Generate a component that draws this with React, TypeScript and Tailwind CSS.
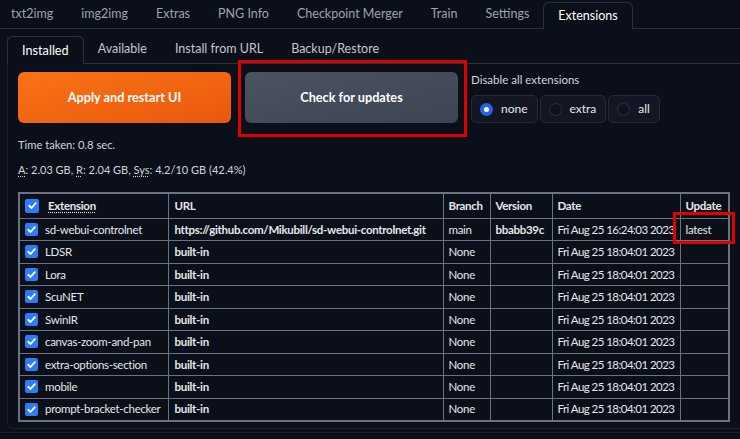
import React from 'react';

const topTabs = ['txt2img', 'img2img', 'Extras', 'PNG Info', 'Checkpoint Merger', 'Train', 'Settings', 'Extensions'];
const innerTabs = ['Installed', 'Available', 'Install from URL', 'Backup/Restore'];

const rows = [
  { name: 'sd-webui-controlnet', url: 'https://github.com/Mikubill/sd-webui-controlnet.git', branch: 'main', version: 'bbabb39c', date: 'Fri Aug 25 16:24:03 2023', update: 'latest' },
  { name: 'LDSR', url: 'built-in', branch: 'None', version: '', date: 'Fri Aug 25 18:04:01 2023', update: '' },
  { name: 'Lora', url: 'built-in', branch: 'None', version: '', date: 'Fri Aug 25 18:04:01 2023', update: '' },
  { name: 'ScuNET', url: 'built-in', branch: 'None', version: '', date: 'Fri Aug 25 18:04:01 2023', update: '' },
  { name: 'SwinIR', url: 'built-in', branch: 'None', version: '', date: 'Fri Aug 25 18:04:01 2023', update: '' },
  { name: 'canvas-zoom-and-pan', url: 'built-in', branch: 'None', version: '', date: 'Fri Aug 25 18:04:01 2023', update: '' },
  { name: 'extra-options-section', url: 'built-in', branch: 'None', version: '', date: 'Fri Aug 25 18:04:01 2023', update: '' },
  { name: 'mobile', url: 'built-in', branch: 'None', version: '', date: 'Fri Aug 25 18:04:01 2023', update: '' },
  { name: 'prompt-bracket-checker', url: 'built-in', branch: 'None', version: '', date: 'Fri Aug 25 18:04:01 2023', update: '' },
];

function Check({ size = 13 }: { size?: number }) {
  return (
    <span
      className="inline-flex items-center justify-center rounded-[2px] bg-[#2b7cf6] shrink-0"
      style={{ width: size, height: size }}
    >
      <svg viewBox="0 0 16 16" className="w-[11px] h-[11px]">
        <path d="M3.2 8.4 L6.6 11.6 L12.8 4.6" fill="none" stroke="white" strokeWidth="2.6" strokeLinecap="round" strokeLinejoin="round" />
      </svg>
    </span>
  );
}

function Radio({ label, checked }: { label: string; checked?: boolean }) {
  return (
    <div className="flex items-center gap-[8px] h-[28px] pl-[8px] pr-[9px] rounded-[5px] border border-[#242a36] bg-[#121723] text-[12px] text-[#e5e7eb]">
      {checked ? (
        <span className="w-[13px] h-[13px] rounded-full bg-[#2563eb] flex items-center justify-center">
          <span className="w-[5px] h-[5px] rounded-full bg-white" />
        </span>
      ) : (
        <span className="w-[13px] h-[13px] rounded-full border border-[#2b3240] bg-[#0e131d]" />
      )}
      <span>{label}</span>
    </div>
  );
}

const cell = 'border border-[#6b7280] px-[5px] whitespace-nowrap overflow-hidden';

export default function App() {
  return (
    <div
      className="relative w-[740px] h-[439px] overflow-hidden bg-[#0b0f19] text-[#e5e7eb]"
      style={{ fontFamily: 'Lato, "Noto Sans", sans-serif' }}
    >
      {/* top tabs */}
      <div className="flex h-[29px] items-end border-b border-[#2a303c] ml-[-3px]">
        {topTabs.map(t => (
          <div
            key={t}
            className={
              t === 'Extensions'
                ? 'h-[27px] px-[14px] flex items-center text-[12.5px] text-white border border-b-0 border-[#2a303c] rounded-t-[6px] bg-[#0b0f19] mb-[-1px]'
                : 'h-[27px] px-[14px] flex items-center text-[12.5px] text-[#9ca3af]'
            }
          >
            {t}
          </div>
        ))}
      </div>

      {/* extensions panel */}
      <div className="pl-[2px] pt-[7px] h-[404px] border-b border-[#1c212c]">
        <div className="ml-[5px] h-[393px] border-l border-b border-[#1c212c] rounded-bl-[6px]">
          {/* inner tabs */}
          <div className="flex h-[28px] items-end border-b border-[#2a303c]">
            {innerTabs.map(t => (
              <div
                key={t}
                className={
                  t === 'Installed'
                    ? 'h-[28px] px-[14px] flex items-center text-[12.7px] text-white border border-b-0 border-[#2a303c] rounded-t-[6px] bg-[#0b0f19] mb-[-1px] ml-[-1px]'
                    : 'h-[28px] px-[14px] flex items-center text-[12.5px] text-[#c2c7d0]'
                }
              >
                {t}
              </div>
            ))}
          </div>

          <div className="pl-[10px] pt-[8px]">
            {/* buttons row */}
            <div className="flex items-start">
              <button className="w-[213px] h-[51px] rounded-[6px] bg-gradient-to-br from-[#f97316] to-[#ea580c] text-[12.7px] font-bold text-white">
                Apply and restart UI
              </button>
              <button className="ml-[14px] w-[213px] h-[51px] rounded-[6px] bg-gradient-to-br from-[#4b5260] to-[#3d4452] text-[12.7px] font-bold text-white">
                Check for updates
              </button>
              <div className="ml-[13px] flex flex-col">
                <div className="text-[11.5px] leading-[16px] text-[#d1d5db]">Disable all extensions</div>
                <div className="flex gap-[2px] mt-[7px]">
                  <Radio label="none" checked />
                  <Radio label="extra" />
                  <Radio label="all" />
                </div>
              </div>
            </div>

            <div className="mt-[14px] text-[11.2px] leading-[16px] text-[#d1d5db]">Time taken: 0.8 sec.</div>
            <div className="mt-[9px] text-[11px] leading-[16px] text-[#d1d5db]">
              <abbr className="underline decoration-dotted underline-offset-2" title="Active">A</abbr>: 2.03 GB,{' '}
              <abbr className="underline decoration-dotted underline-offset-2" title="Reserved">R</abbr>: 2.04 GB,{' '}
              <abbr className="underline decoration-dotted underline-offset-2" title="System">Sys</abbr>: 4.2/10 GB (42.4%)
            </div>

            {/* table */}
            <table className="mt-[14px] w-[710px] table-fixed border-collapse border-2 border-[#6b7280] text-[11.5px] tracking-[-0.3px]">
              <colgroup>
                <col className="w-[149px]" />
                <col className="w-[275px]" />
                <col className="w-[47px]" />
                <col className="w-[62px]" />
                <col className="w-[128px]" />
                <col className="w-[49px]" />
              </colgroup>
              <thead>
                <tr className="h-[25px] font-bold text-left">
                  <th className={cell}>
                    <div className="flex items-center gap-[9px]">
                      <Check size={14} />
                      <span className="underline decoration-dotted underline-offset-2">Extension</span>
                    </div>
                  </th>
                  <th className={cell + ' px-[6px]'}>URL</th>
                  <th className={cell}>Branch</th>
                  <th className={cell}>Version</th>
                  <th className={cell}>Date</th>
                  <th className={cell}>
                    <span className="underline decoration-dotted underline-offset-2">Update</span>
                  </th>
                </tr>
              </thead>
              <tbody>
                {rows.map(r => (
                  <tr key={r.name} className="h-[22.5px]">
                    <td className={cell}>
                      <div className="flex items-center gap-[7px]">
                        <Check />
                        <span>{r.name}</span>
                      </div>
                    </td>
                    <td className={cell + ' px-[6px] font-bold'}>{r.url}</td>
                    <td className={cell}>{r.branch}</td>
                    <td className={cell + ' font-bold'}>{r.version}</td>
                    <td className={cell + ' tracking-[-0.55px]'}>{r.date}</td>
                    <td className={cell}>{r.update}</td>
                  </tr>
                ))}
              </tbody>
            </table>
          </div>
        </div>
      </div>

      {/* red annotation boxes */}
      <div className="absolute left-[238px] top-[60px] w-[229px] h-[77px] border-[3px] border-[#e00000]" />
      <div className="absolute left-[673px] top-[212px] w-[62px] h-[32px] border-[3px] border-[#e00000]" />
    </div>
  );
}
